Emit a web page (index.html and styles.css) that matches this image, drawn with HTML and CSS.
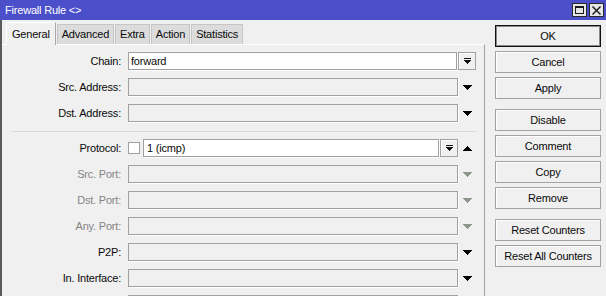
FILE: index.html
```html
<!DOCTYPE html>
<html>
	<head>
		<meta charset="utf-8">
		<title>Firewall Rule</title>
		<link rel="stylesheet" href="styles.css">
	</head>
	<body>
		<header class="titlebar">
			<span class="title">Firewall Rule &lt;&gt;</span>
			<div class="win-btns">
				<span class="win-btn">
					<svg width="11" height="10" viewBox="0 0 11 10"><path d="M1 1h9v8h-9z M2 3v5h7v-5z" fill="#1a1a1a" fill-rule="evenodd"/></svg>
				</span>
				<span class="win-btn">
					<svg width="11" height="10" viewBox="0 0 11 10"><path d="M2 1l3.5 3.5 3.5-3.5 1 1-3.5 3.5 3.5 3.5-1 1-3.5-3.5-3.5 3.5-1-1 3.5-3.5-3.5-3.5z" fill="#1a1a1a"/></svg>
				</span>
			</div>
		</header>
		<div class="window">
			<section class="left">
				<nav class="tabs">
					<span class="tab active">General</span>
					<span class="tab">Advanced</span>
					<span class="tab">Extra</span>
					<span class="tab">Action</span>
					<span class="tab">Statistics</span>
				</nav>
				<div class="panel">
					<div class="row">
						<label>Chain:</label>
						<div class="field"><div class="input white narrow">forward</div></div>
						<div class="trail"><span class="drop-btn"><svg width="9" height="9" viewBox="0 0 9 9"><path d="M1 1h7v1h-7z M1 3h7v1h-1v1h-1v1h-1v1h-1v-1h-1v-1h-1v-1h-1z" fill="#111"/></svg></span></div>
					</div>
					<div class="row">
						<label>Src. Address:</label>
						<div class="field"><div class="input"></div></div>
						<div class="trail"><svg class="arrow" width="9" height="5" viewBox="0 0 9 5"><path d="M0 0h9v1h-1v1h-1v1h-1v1h-1v1h-1v-1h-1v-1h-1v-1h-1v-1h-1z" fill="#000"/></svg></div>
					</div>
					<div class="row">
						<label>Dst. Address:</label>
						<div class="field"><div class="input"></div></div>
						<div class="trail"><svg class="arrow" width="9" height="5" viewBox="0 0 9 5"><path d="M0 0h9v1h-1v1h-1v1h-1v1h-1v1h-1v-1h-1v-1h-1v-1h-1v-1h-1z" fill="#000"/></svg></div>
					</div>
					<div class="sep"></div>
					<div class="row">
						<label>Protocol:</label>
						<div class="field">
							<span class="check"></span>
							<div class="input white proto">1 (icmp)</div>
							<span class="drop-btn"><svg width="9" height="9" viewBox="0 0 9 9"><path d="M1 1h7v1h-7z M1 3h7v1h-1v1h-1v1h-1v1h-1v-1h-1v-1h-1v-1h-1z" fill="#111"/></svg></span>
						</div>
						<div class="trail"><svg class="arrow" width="9" height="5" viewBox="0 0 9 5"><path d="M4 0h1v1h1v1h1v1h1v1h1v1h-9v-1h1v-1h1v-1h1v-1h1z" fill="#000"/></svg></div>
					</div>
					<div class="row off">
						<label>Src. Port:</label>
						<div class="field"><div class="input"></div></div>
						<div class="trail"><svg class="arrow" width="9" height="5" viewBox="0 0 9 5"><path d="M0 0h9v1h-1v1h-1v1h-1v1h-1v1h-1v-1h-1v-1h-1v-1h-1v-1h-1z" fill="#8e958c"/></svg></div>
					</div>
					<div class="row off">
						<label>Dst. Port:</label>
						<div class="field"><div class="input"></div></div>
						<div class="trail"><svg class="arrow" width="9" height="5" viewBox="0 0 9 5"><path d="M0 0h9v1h-1v1h-1v1h-1v1h-1v1h-1v-1h-1v-1h-1v-1h-1v-1h-1z" fill="#8e958c"/></svg></div>
					</div>
					<div class="row off">
						<label>Any. Port:</label>
						<div class="field"><div class="input"></div></div>
						<div class="trail"><svg class="arrow" width="9" height="5" viewBox="0 0 9 5"><path d="M0 0h9v1h-1v1h-1v1h-1v1h-1v1h-1v-1h-1v-1h-1v-1h-1v-1h-1z" fill="#8e958c"/></svg></div>
					</div>
					<div class="row">
						<label>P2P:</label>
						<div class="field"><div class="input"></div></div>
						<div class="trail"><svg class="arrow" width="9" height="5" viewBox="0 0 9 5"><path d="M0 0h9v1h-1v1h-1v1h-1v1h-1v1h-1v-1h-1v-1h-1v-1h-1v-1h-1z" fill="#000"/></svg></div>
					</div>
					<div class="row">
						<label>In. Interface:</label>
						<div class="field"><div class="input"></div></div>
						<div class="trail"><svg class="arrow" width="9" height="5" viewBox="0 0 9 5"><path d="M0 0h9v1h-1v1h-1v1h-1v1h-1v1h-1v-1h-1v-1h-1v-1h-1v-1h-1z" fill="#000"/></svg></div>
					</div>
					<div class="row">
						<label></label>
						<div class="field"><div class="input"></div></div>
						<div class="trail"></div>
					</div>
				</div>
			</section>
			<aside class="actions">
				<button class="btn default">OK</button>
				<button class="btn">Cancel</button>
				<button class="btn">Apply</button>
				<button class="btn group">Disable</button>
				<button class="btn">Comment</button>
				<button class="btn">Copy</button>
				<button class="btn">Remove</button>
				<button class="btn group">Reset Counters</button>
				<button class="btn">Reset All Counters</button>
			</aside>
		</div>
	</body>
</html>
```
FILE: styles.css
```css
* {
	margin: 0;
	padding: 0;
	box-sizing: border-box;
}
body {
	width: 606px;
	height: 296px;
	overflow: hidden;
	background: #f0f0f0;
	font-family: "Liberation Sans", Arial, sans-serif;
	font-size: 11px;
	letter-spacing: -0.2px;
	color: #0a0a0a;
}
.titlebar {
	height: 20px;
	background: #4b4fc9;
	display: flex;
	align-items: center;
	justify-content: space-between;
	padding: 0 2px 0 5px;
	color: #fff;
}
.title {
	font-size: 11px;
}
.win-btns {
	display: flex;
	gap: 2px;
	padding-bottom: 1px;
}
.win-btn {
	width: 15px;
	height: 14px;
	background: #e6e6e6;
	border: 1px solid #2a2a2a;
	display: flex;
	align-items: center;
	justify-content: center;
}
.win-btn svg {
	display: block;
}
.window {
	display: flex;
	height: 276px;
	overflow: hidden;
	border-left: 2px solid #5a5a5a;
}
.left {
	width: 483px;
	display: flex;
	flex-direction: column;
}
.tabs {
	height: 24px;
	flex-shrink: 0;
	display: flex;
	align-items: flex-end;
	padding-left: 4px;
}
.tab {
	height: 20px;
	line-height: 19px;
	padding: 0 4px;
	background: #dcdcdc;
	border: 1px solid #c6c6c6;
	border-bottom: none;
	margin-right: 1px;
}
.tab.active {
	height: 23px;
	line-height: 22px;
	margin-bottom: -1px;
	padding: 0 5px;
	background: #f0f0f0;
	border-color: #fff #a8a8a8 #f0f0f0 #fff;
	position: relative;
	z-index: 1;
}
.panel {
	flex: 1;
	overflow: hidden;
	border-top: 1px solid #fff;
	border-right: 1px solid #a0a0a0;
	padding-top: 7px;
	display: flex;
	flex-direction: column;
	gap: 8px;
}
.row {
	display: flex;
	flex-shrink: 0;
	height: 18px;
	align-items: center;
}
.row label {
	width: 119px;
	margin-right: 7px;
	text-align: right;
	line-height: 18px;
}
.row.off label {
	color: #858585;
}
.field {
	width: 330px;
	height: 18px;
	display: flex;
	align-items: center;
}
.input {
	flex: 1;
	height: 18px;
	line-height: 16px;
	padding-left: 2px;
	background: #f0f0f0;
	border: 1px solid #a0a0a0;
	box-shadow: 1px 1px 0 #fff;
	white-space: nowrap;
}
.input.white {
	background: #fff;
}
.input.narrow {
	margin-right: 1px;
}
.input.proto {
	margin-left: 3px;
	padding-left: 3px;
}
.check {
	width: 12px;
	height: 12px;
	background: #fff;
	border: 1px solid #a0a0a0;
}
.drop-btn {
	width: 18px;
	height: 18px;
	border: 1px solid #a0a0a0;
	box-shadow: inset 1px 1px 0 #fff;
	background: #f0f0f0;
	display: flex;
	align-items: center;
	justify-content: center;
}
.field .drop-btn {
	margin-left: 1px;
}
.trail {
	width: 18px;
	height: 18px;
	display: flex;
	align-items: center;
	justify-content: center;
}
.trail svg {
	display: block;
}
.arrow {
	margin-left: 1px;
	margin-top: 1px;
}
.sep {
	height: 1px;
	flex-shrink: 0;
	margin: 1px 8px -1px 10px;
	background: #d8d8d8;
}
.actions {
	width: 106px;
	margin-left: 10px;
	padding-top: 5px;
	display: flex;
	flex-direction: column;
	gap: 4px;
}
.btn {
	height: 22px;
	flex-shrink: 0;
	font-family: inherit;
	font-size: 11px;
	letter-spacing: -0.2px;
	color: #0a0a0a;
	background: #f0f0f0;
	border: 1px solid #a2a2a2;
	box-shadow: inset 1px 1px 0 #fff;
}
.btn.default {
	border: 1px solid #111;
	box-shadow: inset 0 0 0 1px #8a8a8a;
}
.btn.group {
	margin-top: 6px;
}
```
